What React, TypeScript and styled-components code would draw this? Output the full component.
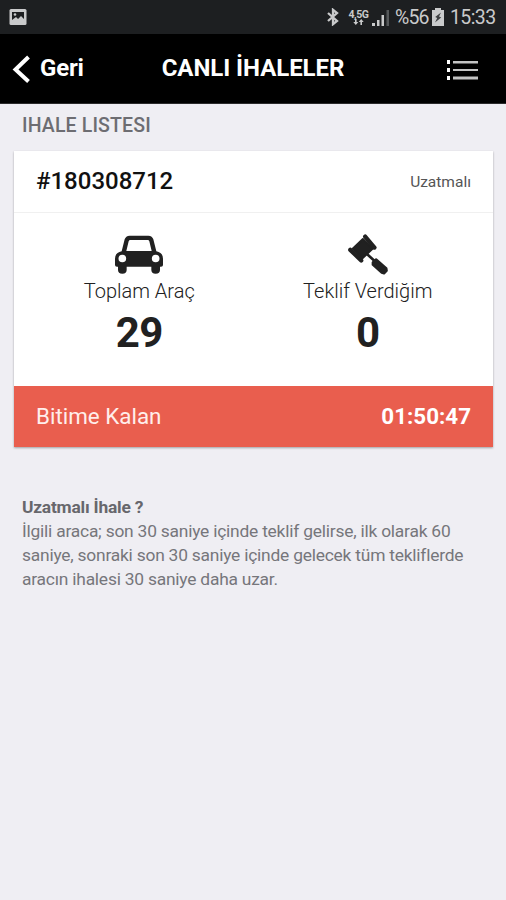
import React from 'react';
import styled, { createGlobalStyle } from 'styled-components';

const GlobalStyle = createGlobalStyle`
  * { box-sizing: border-box; }
  body { margin: 0; background: #efeef3; font-family: Roboto, "Liberation Sans", sans-serif; }
`;

const Screen = styled.div`
  width: 506px;
  height: 900px;
  overflow: hidden;
  background: #efeef3;
`;

const StatusBar = styled.div`
  height: 34px;
  padding: 0 10px 0 9px;
  background: #1d1f21;
  color: #c9cacb;
  display: flex;
  align-items: center;
  justify-content: space-between;
`;

const StatusGroup = styled.div`
  display: flex;
  align-items: center;
  height: 34px;
`;

const StatusText = styled.span<{ $width: number; $spacing: number }>`
  width: ${(p) => p.$width}px;
  font-size: 19.5px;
  line-height: 34px;
  padding-top: 2px;
  white-space: nowrap;
  letter-spacing: ${(p) => p.$spacing}px;
`;

const Icon = styled.svg<{ $gap?: number }>`
  display: block;
  flex: none;
  margin-right: ${(p) => p.$gap ?? 0}px;
`;

const Network = styled.div`
  width: 21px;
  margin-right: 3px;
  display: flex;
  flex-direction: column;
  align-items: center;
  font-size: 10.5px;
  font-weight: 700;
  line-height: 9px;
  letter-spacing: -0.5px;
`;

const NavBar = styled.header`
  height: 70px;
  padding: 0 28px 0 12px;
  background: #000;
  color: #fff;
  display: grid;
  grid-template-columns: 120px 1fr 104px;
  align-items: center;
  border-bottom: 1px solid #2b2b2c;
`;

const Back = styled.div`
  display: flex;
  align-items: center;
  gap: 10px;
  font-size: 24px;
  font-weight: 700;
  letter-spacing: -0.2px;
  line-height: 28px;
`;

const BackLabel = styled.span`
  padding-bottom: 1px;
`;

const Title = styled.h1`
  margin: 0;
  padding-bottom: 1px;
  font-size: 24px;
  line-height: 28px;
  font-weight: 700;
  letter-spacing: -0.05px;
  white-space: nowrap;
  text-align: center;
`;

const MenuButton = styled.div`
  display: flex;
  justify-content: flex-end;
  padding-top: 2px;
`;

const SectionTitle = styled.h2`
  margin: 0;
  height: 47px;
  padding: 11px 22px 0;
  color: #6d6d72;
  font-size: 19.5px;
  line-height: 22px;
  font-weight: 500;
  letter-spacing: 0.15px;
`;

const Card = styled.section`
  margin: 0 13px 0 14px;
  height: 296px;
  background: #fff;
  box-shadow: 0 1px 2px rgba(0, 0, 0, 0.32);
`;

const CardHeader = styled.div`
  height: 62px;
  padding: 0 22px;
  display: flex;
  align-items: center;
  justify-content: space-between;
  border-bottom: 1px solid #f0f0f0;
`;

const AuctionId = styled.span`
  font-size: 24px;
  line-height: 28px;
  font-weight: 500;
  color: #111;
  padding-bottom: 2px;
`;

const AuctionKind = styled.span`
  font-size: 15.5px;
  line-height: 18px;
  color: #555;
`;

const Stats = styled.div`
  height: 173px;
  padding: 21px 11px 0;
  display: grid;
  grid-template-columns: 1fr 1fr;
`;

const Stat = styled.div`
  display: flex;
  flex-direction: column;
  align-items: center;
  color: #212121;
`;

const StatLabel = styled.span`
  margin-top: 2px;
  font-size: 20px;
  line-height: 28px;
  font-weight: 300;
  white-space: nowrap;
`;

const StatValue = styled.span`
  margin-top: 4px;
  font-size: 42px;
  line-height: 48px;
  font-weight: 700;
  letter-spacing: -0.5px;
`;

const Countdown = styled.div`
  height: 61px;
  padding: 0 22px 1px;
  background: #e95e4e;
  color: #fff;
  display: flex;
  align-items: center;
  justify-content: space-between;
  font-size: 22.4px;
`;

const Remaining = styled.span`
  font-weight: 700;
`;

const CountdownLabel = styled.span`
  color: #ffeeeb;
`;

const Note = styled.section`
  padding: 48px 22px 0;
  color: #76767b;
  font-size: 17.4px;
  line-height: 24px;
  letter-spacing: -0.22px;
  white-space: nowrap;
`;

const NoteTitle = styled.div`
  font-weight: 700;
  color: #67676c;
`;

const NoteLine = styled.div``;

const PictureIcon = () => (
  <Icon width="18" height="16" viewBox="0 0 18 16">
    <rect x="0.5" y="0" width="17" height="16" rx="1.5" fill="#c9cacb" />
    <path d="M3 3h12v7l-3-3-3 3-2-2-4 3z" fill="#1d1f21" />
    <circle cx="6" cy="5.5" r="1.3" fill="#c9cacb" />
  </Icon>
);

const BluetoothIcon = () => (
  <Icon $gap={9} width="12" height="18" viewBox="0 0 12 18" fill="none" stroke="#c9cacb" strokeWidth="2.3">
    <path d="M1 5l9 8-4 3.2V1.8L10 5l-9 8" />
  </Icon>
);

const DataArrows = () => (
  <Icon width="11" height="6" viewBox="0 0 11 6" fill="#c9cacb">
    <path d="M2 0h1.6v3H5.3L2.8 6 .3 3H2zM7.4 6H9V3h1.7L8.2 0 5.7 3h1.7z" />
  </Icon>
);

const SignalIcon = () => (
  <Icon $gap={6} width="17" height="17" viewBox="0 0 17 17" fill="#c9cacb">
    <path d="M0 14h3v3H0zM5 11h2.5v6H5zM9.5 6H12v11H9.5z" />
    <path d="M14.5 1H17v16h-2.5z" fill="#55585a" />
  </Icon>
);

const BatteryIcon = () => (
  <Icon $gap={6} width="12" height="18" viewBox="0 0 12 18">
    <path d="M3 0h6v2h3v16H0V2h3z" fill="#c9cacb" />
    <path d="M9 4.5L3.2 9l2 1L3 14.5 9.2 9.5 7 8.5z" fill="#3e4042" />
  </Icon>
);

const ChevronIcon = () => (
  <Icon width="18" height="28" viewBox="0 0 18 28" fill="none" stroke="#fff" strokeWidth="4">
    <path d="M16.5 2L3.5 14.5l13 12" />
  </Icon>
);

const ListIcon = () => (
  <Icon width="31" height="20" viewBox="0 0 31 20">
    <path d="M0 0h3v4H0zM0 8h3v4H0zM0 16h3v4H0z" fill="#fff" />
    <path d="M6 1h25v2.5H6zM6 9h25v2H6zM6 16.5h25v3H6z" fill="#c4c4c4" />
  </Icon>
);

const CarIcon = () => (
  <Icon width="48" height="41" viewBox="0 0 144 123" fill="#212121">
    <path
      fillRule="evenodd"
      d="M44 2Q32 3 29 13L20 49Q0 53 0 71V90Q0 95 6 95H9V105Q9 116 22 116T35 105V95H109V105Q109 116 122 116T135 105V95H138Q144 95 144 90V71Q144 53 124 49L115 13Q112 3 100 2ZM46 15H98Q102 15 103 19L110 48H34L41 19Q42 15 46 15ZM22 59A11.5 11.5 0 1 0 22 82A11.5 11.5 0 1 0 22 59ZM122 59A11.5 11.5 0 1 0 122 82A11.5 11.5 0 1 0 122 59Z"
      transform="translate(0 3)"
    />
  </Icon>
);

const GavelIcon = () => (
  <Icon width="41" height="41" viewBox="-2 0 124 124" fill="#212121" stroke="#212121" strokeLinecap="round" strokeLinejoin="round">
    <path d="M16 44L46 15 76 44 44 74z" strokeWidth="6" />
    <path d="M53 8L81 41M8 48L41 80" strokeWidth="13" />
    <path d="M60 62L84 84" strokeWidth="8" />
    <path d="M76 86L86 77 117 104 118 111 110 119 103 117 76 93z" strokeWidth="7" />
  </Icon>
);

export default function App() {
  return (
    <>
      <GlobalStyle />
      <Screen>
        <StatusBar>
          <PictureIcon />
          <StatusGroup>
            <BluetoothIcon />
            <Network>
              4,5G
              <DataArrows />
            </Network>
            <SignalIcon />
            <StatusText $width={37} $spacing={-0.9}>%56</StatusText>
            <BatteryIcon />
            <StatusText $width={46} $spacing={-0.6}>15:33</StatusText>
          </StatusGroup>
        </StatusBar>
        <NavBar>
          <Back>
            <ChevronIcon />
            <BackLabel>Geri</BackLabel>
          </Back>
          <Title>CANLI İHALELER</Title>
          <MenuButton>
            <ListIcon />
          </MenuButton>
        </NavBar>
        <SectionTitle>IHALE LISTESI</SectionTitle>
        <Card>
          <CardHeader>
            <AuctionId>#180308712</AuctionId>
            <AuctionKind>Uzatmalı</AuctionKind>
          </CardHeader>
          <Stats>
            <Stat>
              <CarIcon />
              <StatLabel>Toplam Araç</StatLabel>
              <StatValue>29</StatValue>
            </Stat>
            <Stat>
              <GavelIcon />
              <StatLabel>Teklif Verdiğim</StatLabel>
              <StatValue>0</StatValue>
            </Stat>
          </Stats>
          <Countdown>
            <CountdownLabel>Bitime Kalan</CountdownLabel>
            <Remaining>01:50:47</Remaining>
          </Countdown>
        </Card>
        <Note>
          <NoteTitle>Uzatmalı İhale ?</NoteTitle>
          <NoteLine>İlgili araca; son 30 saniye içinde teklif gelirse, ilk olarak 60</NoteLine>
          <NoteLine>saniye, sonraki son 30 saniye içinde gelecek tüm tekliflerde</NoteLine>
          <NoteLine>aracın ihalesi 30 saniye daha uzar.</NoteLine>
        </Note>
      </Screen>
    </>
  );
}
